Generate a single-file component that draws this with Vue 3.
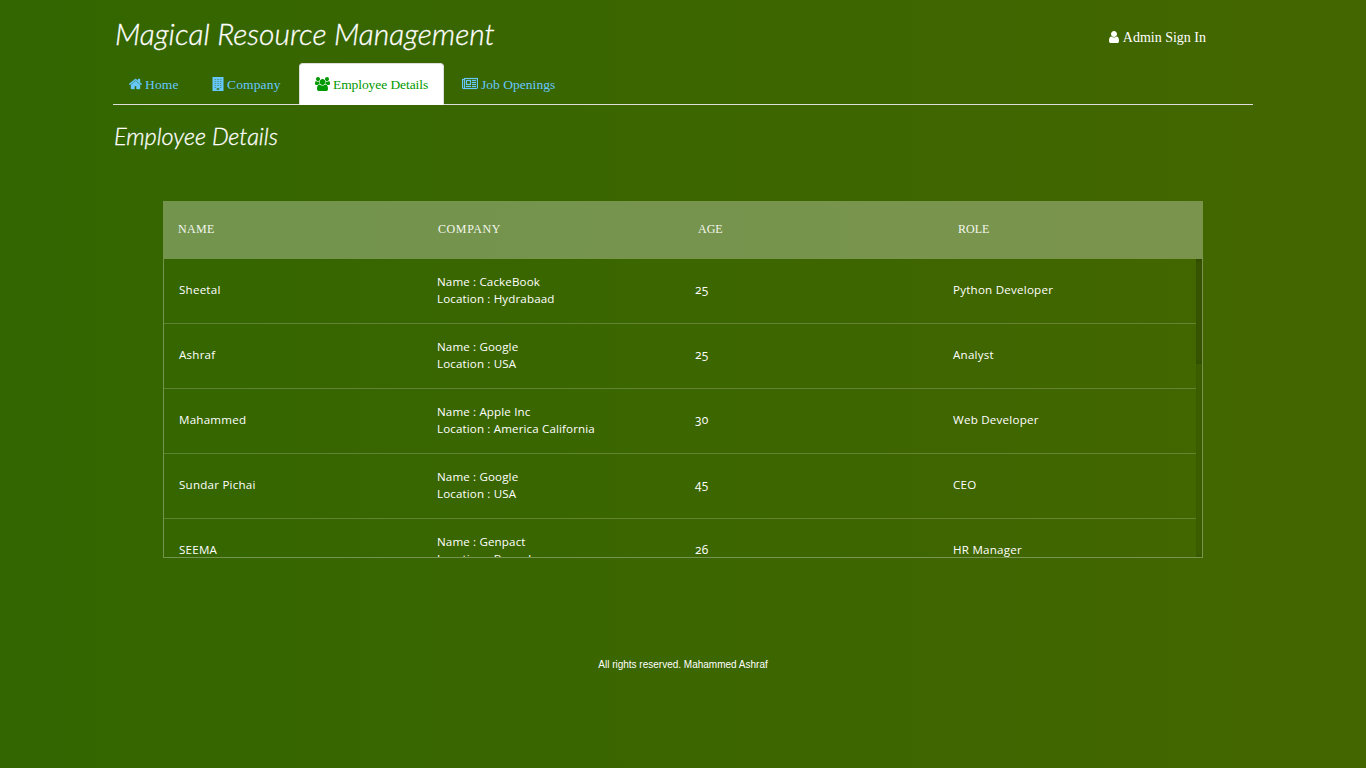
<script setup>
const tabs = [
  { id: 'home', label: 'Home', w: 13, vb: '0 0 1664 1792' },
  { id: 'company', label: 'Company', w: 12, vb: '0 0 1408 1792' },
  { id: 'employees', label: 'Employee Details', w: 15, vb: '0 0 1920 1792', active: true },
  { id: 'jobs', label: 'Job Openings', w: 16, vb: '0 0 2048 1792' },
]
const heads = ['Name', 'Company', 'Age', 'Role']
const rows = [
  { name: 'Sheetal', company: 'CackeBook', location: 'Hydrabaad', age: 25, role: 'Python Developer' },
  { name: 'Ashraf', company: 'Google', location: 'USA', age: 25, role: 'Analyst' },
  { name: 'Mahammed', company: 'Apple Inc', location: 'America California', age: 30, role: 'Web Developer' },
  { name: 'Sundar Pichai', company: 'Google', location: 'USA', age: 45, role: 'CEO' },
  { name: 'SEEMA', company: 'Genpact', location: 'Bengal', age: 26, role: 'HR Manager' },
]
</script>

<template>
  <div class="page">
    <header class="top">
      <h1>Magical Resource Management</h1>
      <a class="sign">
        <svg width="10" height="14" viewBox="0 0 1280 1792"><path fill="currentColor" d="M1280 1399q0 109-62.500 187t-150.500 78h-854q-88 0-150.500-78t-62.500-187q0-85 8.500-160.500t31.500-152 58.500-131 94-89 134.500-34.500q131 128 313 128t313-128q76 0 134.500 34.500t94 89 58.500 131 31.500 152 8.500 160.500zm-256-887q0 159-112.500 271.500t-271.500 112.500-271.500-112.500-112.500-271.500 112.500-271.500 271.500-112.500 271.500 112.500 112.500 271.500z"/></svg>
        <span>Admin Sign In</span>
      </a>
    </header>
    <nav>
      <a v-for="t in tabs" :key="t.id" :class="['tab', t.id, { active: t.active }]">
        <svg :width="t.w" height="14" :viewBox="t.vb">
          <path v-if="t.id === 'home'" fill="currentColor" stroke="currentColor" stroke-width="50" d="M1408 992v480q0 26-19 45t-45 19h-384v-384h-256v384h-384q-26 0-45-19t-19-45v-480l575-474 575 474q2 0 2 0zm223-69l-62 74q-8 9-21 11h-3q-13 0-21-7l-692-577-692 577q-12 8-24 7-13-2-21-11l-62-74q-8-10-7-23.500t11-21.500l719-599q32-26 76-26t76 26l244 204v-195q0-14 9-23t23-9h192q14 0 23 9t9 23v408l219 182q10 8 11 21.500t-7 23.500z"/>
          <path v-else-if="t.id === 'company'" fill="currentColor" fill-rule="evenodd" d="M0 0h1408v1792H0zM270 270v64h200V270zm334 0v64h200V270zm334 0v64h200V270zM270 526v64h200V526zm334 0v64h200V526zm334 0v64h200V526zM270 782v64h200V782zm334 0v64h200V782zm334 0v64h200V782zM270 1038v64h200v-64zm334 0v64h200v-64zm334 0v64h200v-64zM270 1294v64h200v-64zm668 0v64h200v-64zM540 1430v200h328v-200z"/>
          <path v-else-if="t.id === 'employees'" fill="currentColor" d="M593 896q-162 5-265 128H194q-82 0-138-40.500T0 865q0-353 124-353 6 0 43.500 21t97.500 42.500T384 597q67 0 133-23-5 37-5 66 0 139 81 256zm1071 637q0 120-73 189.500t-194 69.500H523q-121 0-194-69.500T256 1533q0-53 3.500-103.500t14-109T300 1212t43-97.500 62-81 85.500-53.500T602 960q10 0 43 21.500t73 48 107 48 135 21.500 135-21.500 107-48 73-48 43-21.500q61 0 111.500 20t85.500 53.500 62 81 43 97.500 26.500 108.500 14 109 3.500 103.500zM640 256q0 106-75 181t-181 75-181-75-75-181 75-181T384 0t181 75 75 181zm704 384q0 159-112.500 271.500T960 1024 688.500 911.500 576 640t112.500-271.500T960 256t271.500 112.500T1344 640zm576 225q0 78-56 118.500t-138 40.500h-134q-103-123-265-128 81-117 81-256 0-29-5-66 66 23 133 23 59 0 119-21.500t97.500-42.500 43.500-21q124 0 124 353zm-128-609q0 106-75 181t-181 75-181-75-75-181 75-181 181-75 181 75 75 181z"/>
          <path v-else fill="currentColor" stroke="currentColor" stroke-width="25" d="M1024 512H640v384h384V512zm128 640v128H512v-128h640zm0-768v640H512V384h640zm640 768v128h-512v-128h512zm0-256v128h-512V896h512zm0-256v128h-512V640h512zm0-256v128h-512V384h512zM256 1344V384H128v960q0 26 19 45t45 19 45-19 19-45zm1664 0V256H384v1088q0 33-11 64h1483q26 0 45-19t19-45zM2048 128v1216q0 80-56 136t-136 56H192q-80 0-136-56T0 1344V256h256V128h1792z"/>
        </svg>
        <span class="label">{{ t.label }}</span>
      </a>
    </nav>
    <h2>Employee Details</h2>
    <section class="table">
      <div class="head"><div v-for="h in heads" :key="h" :class="h.toLowerCase()">{{ h }}</div></div>
      <div class="viewport">
        <div class="rows">
          <div v-for="r in rows" :key="r.name" class="row">
            <div>{{ r.name }}</div>
            <div class="firm">Name : {{ r.company }}<br>Location : {{ r.location }}</div>
            <div class="num">{{ r.age }}</div>
            <div>{{ r.role }}</div>
          </div>
        </div>
        <div class="track"><div class="thumb"></div></div>
      </div>
    </section>
    <footer>All rights reserved. Mahammed Ashraf</footer>
  </div>
</template>

<style>
body { margin: 0; overflow: hidden; }
</style>

<style scoped>
* { box-sizing: border-box; }
.page { height: 768px; padding: 0 113px; color: #fff; background: linear-gradient(to right, #336600, #446600); overflow: hidden; }
.top { height: 63px; display: flex; justify-content: space-between; padding: 0 47px 0 2px; }
h1, h2 { margin: 0; font-family: Lato, sans-serif; font-style: italic; font-weight: 300; white-space: nowrap; -webkit-text-stroke: .3px #fff; }
h1 { font-size: 30px; line-height: 36px; padding-top: 15px; }
.sign { display: flex; align-items: center; gap: 4px; height: 20px; margin-top: 27px; font: 14px/20px "Liberation Serif", serif; white-space: nowrap; }
.sign span { padding-top: 2px; }
nav { height: 42px; display: flex; border-bottom: 1px solid #ddd; }
.tab { height: 42px; padding: 13px 15px 0; border: 1px solid transparent; margin-right: 2px; display: flex; gap: 3px; color: #66c8ff; font: 13.5px/16px "Liberation Serif", serif; white-space: nowrap; }
.tab svg { flex: none; }
.home { width: 81px; }
.home .label { letter-spacing: .15px; }
.company { width: 101px; }
.company .label { letter-spacing: .15px; }
.employees { width: 145px; }
.employees .label { letter-spacing: -.08px; }
.jobs .label { letter-spacing: .03px; }
.active { color: #090; background: #fff; border-color: #ddd #ddd #fff; border-radius: 4px 4px 0 0; }
h2 { height: 47px; font-size: 23.5px; line-height: 30px; padding: 16px 0 0 1px; }
.table { width: 1040px; margin: 49px auto 0; }
.head { display: grid; grid-template-columns: repeat(4, 260px); height: 58px; background: rgba(255,255,255,.3); color: #f3f7ee; font: 12px/56px "Liberation Serif", serif; text-transform: uppercase; }
.head div { padding-left: 15px; }
.head .name { letter-spacing: .3px; }
.head .company { width: auto; letter-spacing: .6px; }
.viewport { height: 299px; border: 1px solid rgba(255,255,255,.3); border-top: 0; display: flex; overflow: hidden; }
.rows { width: 1032px; flex: none; }
.row { display: grid; grid-template-columns: repeat(4, 258px); align-items: center; height: 65px; border-bottom: 1px solid rgba(255,255,255,.2); font: 11.6px/17px "Open Sans", sans-serif; letter-spacing: .22px; }
.row div { padding: 0 0 4px 15px; }
.row .firm { padding-bottom: 3px; letter-spacing: .13px; }
.row .num { font-size: 12px; font-variant-numeric: oldstyle-nums; }
.track { width: 6px; background: rgba(0,0,0,.01); box-shadow: inset 0 0 6px rgba(0,0,0,.18); }
.thumb { height: 105px; box-shadow: inset 0 0 6px rgba(0,0,0,.22); }
footer { margin-top: 100px; text-align: center; font: 10px/14px "Liberation Sans", sans-serif; }
</style>
